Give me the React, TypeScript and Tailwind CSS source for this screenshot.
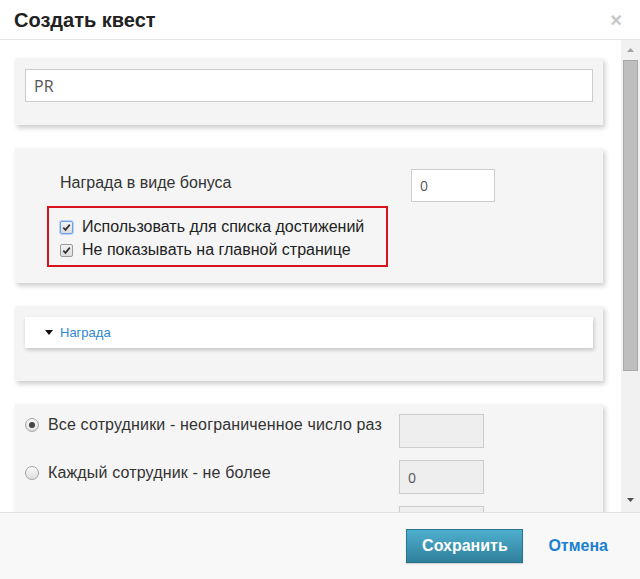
import React from "react";

const font = { fontFamily: '"Liberation Sans", Arial, sans-serif' };

function Check({ focused }: { focused?: boolean }) {
  return (
    <span
      className={`flex h-[13px] w-[13px] shrink-0 items-center justify-center rounded-[2px] border bg-gradient-to-b from-[#f4f4f4] to-[#dcdcdc] ${
        focused ? "border-[#6d9ee8] shadow-[0_0_0_1px_#bcd3f7]" : "border-[#9a9a9a]"
      }`}
    >
      <svg width="9" height="9" viewBox="0 0 9 9">
        <path d="M1.3 4.6 L3.5 6.9 L7.8 1.6" fill="none" stroke="#333" strokeWidth="1.7" />
      </svg>
    </span>
  );
}

function Radio({ on }: { on?: boolean }) {
  return (
    <span className="flex h-[14px] w-[14px] shrink-0 items-center justify-center rounded-full border border-[#a3a3a3] bg-gradient-to-b from-[#fafafa] to-[#dedede]">
      {on && <span className="h-[6px] w-[6px] rounded-full bg-[#444]" />}
    </span>
  );
}

export default function App() {
  return (
    <div className="flex h-[579px] w-[640px] flex-col overflow-hidden bg-white text-[#333]" style={font}>
      {/* header */}
      <div className="flex h-[40px] shrink-0 items-center justify-between border-b border-[#e5e5e5] pl-[14px] pr-[18px]">
        <h1 className="text-[20px] font-bold text-[#222]">Создать квест</h1>
        <span className="text-[20px] font-bold leading-none text-[#c8c8c8]">×</span>
      </div>

      {/* body */}
      <div className="flex min-h-0 flex-1">
        <div className="flex w-[621px] flex-col gap-[23px] overflow-hidden pl-[15px] pr-[18px] pt-[18px]">
          <div className="shrink-0 bg-[#f4f4f4] px-[10px] pb-[23px] pt-[11px] shadow-[2px_3px_5px_rgba(0,0,0,0.2)]">
            <div
              className="flex h-[33px] items-center border border-[#cccccc] bg-white px-[8px] text-[16px] text-[#555]"
              style={{ fontFamily: '"Open Sans", sans-serif' }}
            >
              PR
            </div>
          </div>

          <div className="h-[135px] shrink-0 bg-[#f5f5f5] pl-[32px] pt-[21px] shadow-[2px_3px_5px_rgba(0,0,0,0.2)]">
            <div className="flex items-start">
              <span className="mt-[2px] w-[364px] pl-[13px] text-[16px] text-[#333]">Награда в виде бонуса</span>
              <div
                className="flex h-[33px] w-[84px] items-center border border-[#cccccc] bg-white px-[8px] text-[14px] text-[#555]"
                style={{ fontFamily: '"Open Sans", sans-serif' }}
              >
                0
              </div>
            </div>
            <div className="mt-[4px] flex w-[341px] flex-col gap-[5px] border-2 border-[#d8131b] pb-[6px] pl-[11px] pt-[10px] text-[16px] text-[#222]">
              <label className="flex h-[18px] items-center gap-[9px]">
                <Check focused />
                Использовать для списка достижений
              </label>
              <label className="flex h-[18px] items-center gap-[9px]">
                <Check />
                Не показывать на главной странице
              </label>
            </div>
          </div>

          <div className="h-[75px] shrink-0 bg-[#f4f4f4] px-[10px] pt-[11px] shadow-[2px_3px_5px_rgba(0,0,0,0.2)]">
            <div className="flex h-[31px] items-center gap-[7px] bg-white pl-[20px] shadow-[1px_2px_4px_rgba(0,0,0,0.2)]">
              <svg width="8" height="5" viewBox="0 0 8 5">
                <path d="M0 0 H8 L4 5 Z" fill="#111" />
              </svg>
              <span className="text-[13px] text-[#2f86d3]">Награда</span>
            </div>
          </div>

          <div className="h-[140px] shrink-0 bg-[#f5f5f5] pl-[10px] pt-[10px] shadow-[2px_3px_5px_rgba(0,0,0,0.2)]">
            <div className="flex flex-col gap-[12px]">
              <div className="flex items-start">
                <div className="mt-[2px] flex h-[18px] w-[374px] items-center gap-[9px] text-[16px] tracking-[0.15px] text-[#333]">
                  <Radio on />
                  <span>Все сотрудники - неограниченное число раз</span>
                </div>
                <div className="h-[34px] w-[85px] border border-[#cccccc] bg-[#eeeeee]" />
              </div>
              <div className="flex items-start">
                <div className="mt-[4px] flex h-[18px] w-[374px] items-center gap-[9px] text-[16px] tracking-[0.15px] text-[#333]">
                  <Radio />
                  <span>Каждый сотрудник - не более</span>
                </div>
                <div
                  className="flex h-[34px] w-[85px] items-center border border-[#cccccc] bg-[#eeeeee] px-[8px] text-[14px] text-[#555]"
                  style={{ fontFamily: '"Open Sans", sans-serif' }}
                >
                  0
                </div>
              </div>
              <div className="flex">
                <div className="w-[374px]" />
                <div className="h-[34px] w-[85px] border border-[#cccccc] bg-[#eeeeee]" />
              </div>
            </div>
          </div>
        </div>

        {/* scrollbar */}
        <div className="flex w-[19px] flex-col items-center bg-[#f1f1f1]">
          <div className="flex h-[20px] items-center justify-center">
            <svg width="7" height="4" viewBox="0 0 7 4">
              <path d="M0 4 L3.5 0 L7 4 Z" fill="#a3a3a3" />
            </svg>
          </div>
          <div className="h-[311px] w-[15px] border border-[#a9a9a9] bg-[#bebebe]" />
          <div className="flex-1" />
          <div className="flex h-[24px] items-center justify-center">
            <svg width="7" height="4" viewBox="0 0 7 4">
              <path d="M0 0 L7 0 L3.5 4 Z" fill="#505050" />
            </svg>
          </div>
        </div>
      </div>

      {/* footer */}
      <div className="flex h-[67px] shrink-0 items-center justify-end gap-[25px] border-t border-[#e2e2e2] bg-[#f8f8f8] pr-[32px]">
        <button className="h-[34px] w-[117px] border border-[#2a7590] bg-gradient-to-b from-[#4eb0cf] to-[#2f7f9b] text-[16px] font-bold text-white shadow-[0_1px_1px_rgba(0,0,0,0.15)]">
          Сохранить
        </button>
        <span className="text-[16px] font-bold text-[#1b7fd2]">Отмена</span>
      </div>
    </div>
  );
}
